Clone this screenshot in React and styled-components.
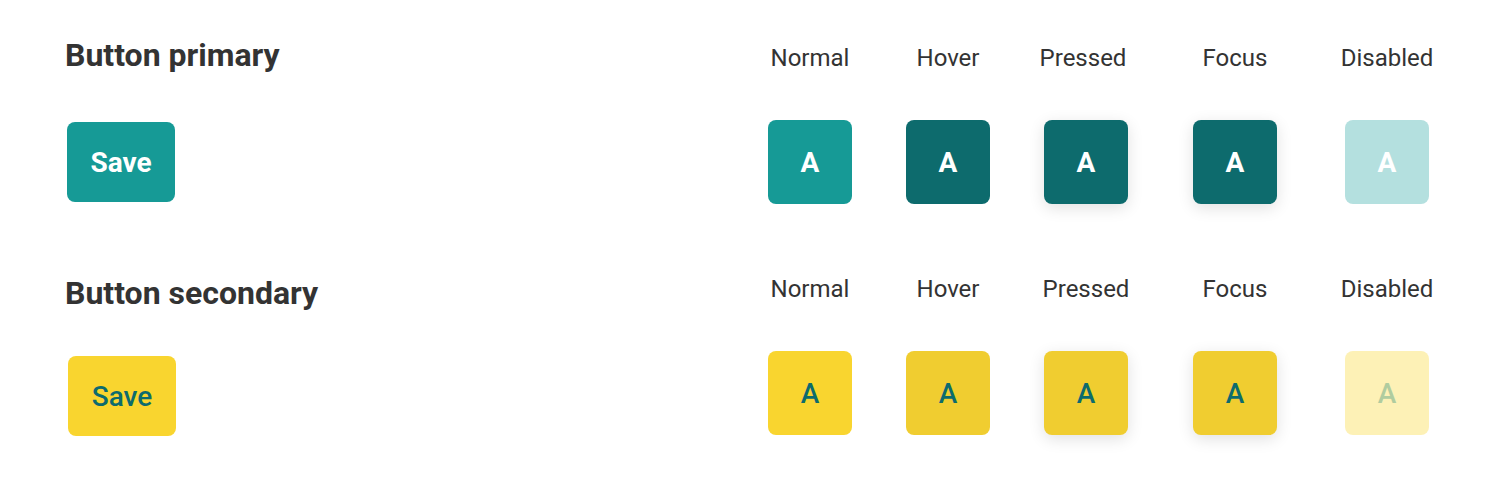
import React from "react";
import styled, { createGlobalStyle } from "styled-components";

const Global = createGlobalStyle`
  html, body { margin: 0; padding: 0; background: #ffffff; }
  body { font-family: Roboto, "Noto Sans", "Liberation Sans", sans-serif; color: #333333; }
`;

const Page = styled.div`
  width: 1492px;
  height: 494px;
  box-sizing: border-box;
  padding-left: 65px;
  display: flex;
  flex-direction: column;
`;

const Section = styled.section`
  display: flex;
  align-items: flex-start;
  margin-top: ${(p) => p.$top}px;
`;

const Left = styled.div`
  width: 676px;
  display: flex;
  flex-direction: column;
  align-items: flex-start;
  padding-top: ${(p) => p.$pad}px;
`;

const Heading = styled.h2`
  margin: 0;
  font-size: 32px;
  line-height: 38px;
  font-weight: 700;
  color: #333333;
  white-space: nowrap;
`;

const SaveButton = styled.button`
  margin-top: ${(p) => p.$gap}px;
  margin-left: ${(p) => p.$inset}px;
  width: 108px;
  height: 80px;
  border: none;
  border-radius: 8px;
  font-family: Roboto, sans-serif;
  font-size: 28px;
  font-weight: ${(p) => (p.$kind === "primary" ? 700 : 500)};
  background: ${(p) => (p.$kind === "primary" ? "#169a96" : "#f9d52f")};
  color: ${(p) => (p.$kind === "primary" ? "#ffffff" : "#0d6b6d")};
  padding: 0;
`;

const States = styled.div`
  display: grid;
  grid-template-columns: 138px 138px 138px 160px 144px;
  grid-template-rows: 28px 84px;
  row-gap: 48px;
  padding-top: ${(p) => p.$pad}px;
`;

const StateLabel = styled.div`
  font-size: 24px;
  line-height: 28px;
  font-weight: 400;
  color: #333333;
  text-align: center;
  white-space: nowrap;
  transform: translateX(${(p) => p.$shift || 0}px);
`;

const Cell = styled.div`
  display: flex;
  justify-content: center;
`;

const palette = {
  primary: {
    normal: ["#169a96", "#ffffff"],
    hover: ["#0d6b6d", "#ffffff"],
    pressed: ["#0d6b6d", "#ffffff"],
    focus: ["#0d6b6d", "#ffffff"],
    disabled: ["#b4e0df", "#ffffff"],
  },
  secondary: {
    normal: ["#f9d52f", "#0d6b6d"],
    hover: ["#f0cd30", "#0d6b6d"],
    pressed: ["#f0cd30", "#0d6b6d"],
    focus: ["#f0cd30", "#0d6b6d"],
    disabled: ["#fdf1b6", "#b0cc9f"],
  },
};

const Swatch = styled.div`
  width: 84px;
  height: 84px;
  border-radius: 8px;
  display: flex;
  align-items: center;
  justify-content: center;
  font-size: 28px;
  font-weight: ${(p) => (p.$kind === "primary" ? 700 : 500)};
  background: ${(p) => palette[p.$kind][p.$state][0]};
  color: ${(p) => palette[p.$kind][p.$state][1]};
  box-shadow: ${(p) =>
    p.$state === "pressed" || p.$state === "focus"
      ? "0 4px 16px rgba(0, 0, 0, 0.12)"
      : "none"};
`;

const STATES = [
  ["normal", "Normal"],
  ["hover", "Hover"],
  ["pressed", "Pressed"],
  ["focus", "Focus"],
  ["disabled", "Disabled"],
];

function ButtonSection({ kind, title, top, leftPad, statesPad, gap, inset, shifts }) {
  return (
    <Section $top={top}>
      <Left $pad={leftPad}>
        <Heading>{title}</Heading>
        <SaveButton $kind={kind} $gap={gap} $inset={inset}>
          Save
        </SaveButton>
      </Left>
      <States $pad={statesPad}>
        {STATES.map(([key, label], i) => (
          <StateLabel key={key} $shift={shifts[i]}>
            {label}
          </StateLabel>
        ))}
        {STATES.map(([key]) => (
          <Cell key={key}>
            <Swatch $kind={kind} $state={key}>A</Swatch>
          </Cell>
        ))}
      </States>
    </Section>
  );
}

export default function App() {
  return (
    <>
      <Global />
      <Page>
        <ButtonSection
          kind="primary"
          title="Button primary"
          top={36}
          leftPad={0}
          statesPad={8}
          gap={48}
          inset={2}
          shifts={[0, 0, -3, 0, 0]}
        />
        <ButtonSection
          kind="secondary"
          title="Button secondary"
          top={70}
          leftPad={0}
          statesPad={1}
          gap={44}
          inset={3}
          shifts={[0, 0, 0, 0, 0]}
        />
      </Page>
    </>
  );
}
